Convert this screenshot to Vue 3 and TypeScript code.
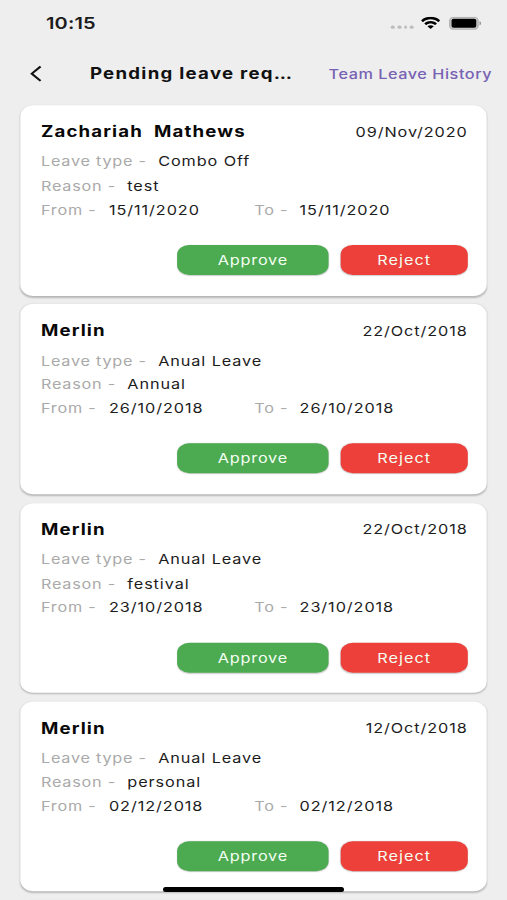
<script setup lang="ts">
interface LeaveRequest {
  id: number
  name: string
  applied: string
  type: string
  reason: string
  from: string
  to: string
}

const requests: LeaveRequest[] = [
  { id: 1, name: 'Zachariah\u00a0 Mathews', applied: '09/Nov/2020', type: 'Combo Off', reason: 'test', from: '15/11/2020', to: '15/11/2020' },
  { id: 2, name: 'Merlin', applied: '22/Oct/2018', type: 'Anual Leave', reason: 'Annual', from: '26/10/2018', to: '26/10/2018' },
  { id: 3, name: 'Merlin', applied: '22/Oct/2018', type: 'Anual Leave', reason: 'festival', from: '23/10/2018', to: '23/10/2018' },
  { id: 4, name: 'Merlin', applied: '12/Oct/2018', type: 'Anual Leave', reason: 'personal', from: '02/12/2018', to: '02/12/2018' },
]
</script>

<template>
  <div class="viewport">
    <div class="screen">
      <div class="status">
        <span class="time">10:15</span>
        <div class="indicators">
          <span class="dots"><i v-for="n in 4" :key="n"></i></span>
          <svg class="wifi" viewBox="0 0 16 12" preserveAspectRatio="none">
            <path d="M8 2.4c2.2 0 4.3.9 5.9 2.4.1.1.3.1.4 0l1.1-1.2c.1-.1.1-.3 0-.4C11.3-.8 4.7-.8.6 3.2c-.1.1-.1.3 0 .4l1.1 1.2c.1.1.3.1.4 0C3.7 3.3 5.8 2.4 8 2.4z" />
            <path d="M8 6.2c1.2 0 2.4.5 3.3 1.3.1.1.3.1.4 0l1.2-1.2c.1-.1.1-.3 0-.4-2.8-2.6-7-2.6-9.8 0-.1.1-.1.3 0 .4l1.2 1.2c.1.1.3.1.4 0C5.6 6.7 6.8 6.2 8 6.2z" />
            <path d="M10.3 8.9c.1-.1.1-.3 0-.4-1.3-1.1-3.3-1.1-4.6 0-.1.1-.1.3 0 .4l2.1 2.1c.1.1.3.1.4 0z" />
          </svg>
          <svg class="battery" viewBox="0 0 25 12" preserveAspectRatio="none">
            <rect x=".7" y=".7" width="21.3" height="10.6" rx="3" fill="#d4d4d4" stroke="#b4b4b4" stroke-width="1.2" />
            <rect x="2" y="2" width="18.7" height="8" rx="1.6" fill="#000" />
            <path d="M23.1 4c1.7.7 1.7 3.3 0 4z" fill="#999" />
          </svg>
        </div>
      </div>

      <header class="bar">
        <button class="back" aria-label="Back">
          <svg viewBox="0 0 9 15"><path d="M8 1 1.5 7.5 8 14" /></svg>
        </button>
        <h1 class="title">Pending leave req<span class="ellipsis">...</span></h1>
        <a class="history">Team Leave History</a>
      </header>

      <main class="list">
        <article v-for="r in requests" :key="r.id" class="card">
          <div class="head">
            <h2 class="name">{{ r.name }}</h2>
            <span class="applied">{{ r.applied }}</span>
          </div>
          <div class="row"><span class="label">Leave type -</span><span class="value">{{ r.type }}</span></div>
          <div class="row"><span class="label">Reason -</span><span class="value">{{ r.reason }}</span></div>
          <div class="dates">
            <div class="row from"><span class="label">From -</span><span>{{ r.from }}</span></div>
            <div class="row"><span class="label">To -</span><span>{{ r.to }}</span></div>
          </div>
          <div class="actions">
            <button class="btn approve">Approve</button>
            <button class="btn reject">Reject</button>
          </div>
        </article>
        <div class="card"></div>
      </main>
    </div>
    <div class="home"></div>
  </div>
</template>

<style>
body {
  background: #eee;
}
</style>

<style scoped>
.viewport {
  position: relative;
  width: 507px;
  height: 900px;
  overflow: hidden;
  background: #eee;
}
/* 375 x 812 logical screen stretched over the viewport */
.screen {
  width: 375px;
  height: 812px;
  transform: scale(1.352, 1.10837);
  transform-origin: 0 0;
  font-family: Inter, 'Liberation Sans', sans-serif;
  font-size: 12px;
  letter-spacing: 0.69px;
  color: #1c1c1c;
}
.status {
  display: flex;
  justify-content: space-between;
  align-items: center;
  height: 42px;
  padding: 0 19px 0 34px;
}
.time {
  font-size: 14.8px;
  font-weight: 600;
  letter-spacing: 0.1px;
}
.indicators {
  display: flex;
  align-items: center;
}
.dots {
  display: flex;
  gap: 2px;
  padding-top: 7px;
  margin-right: 5.2px;
}
.dots i {
  width: 2.8px;
  height: 3.3px;
  border-radius: 50%;
  background: #bdbdbd;
}
.wifi {
  width: 15px;
  height: 12px;
  margin-right: 5.2px;
}
.battery {
  width: 24.5px;
  height: 12px;
}
.bar {
  display: flex;
  align-items: center;
  height: 48px;
  padding: 0 11px 0 22px;
}
.back {
  display: flex;
  width: 44.5px;
  padding: 0;
  border: 0;
  background: none;
}
.back svg {
  width: 9px;
  height: 15px;
  fill: none;
  stroke: #111;
  stroke-width: 1.7;
}
.title {
  margin: 0;
  font-size: 13.8px;
  font-weight: 700;
  letter-spacing: 0.93px;
  color: #111;
  white-space: nowrap;
}
.ellipsis {
  letter-spacing: -0.2px;
}
.history {
  margin-left: auto;
  font-weight: 500;
  letter-spacing: 0.41px;
  color: #7762b3;
  white-space: nowrap;
}
.list {
  display: flex;
  flex-direction: column;
  gap: 7.7px;
  padding: 5px 14.8px 0 15.2px;
}
.card {
  box-sizing: border-box;
  flex: none;
  height: 171.6px;
  padding: 14px 14.5px 0 15.1px;
  border-radius: 10px;
  background: #fff;
  box-shadow: 0 1px 1.5px rgba(0, 0, 0, 0.23);
}
.head {
  display: flex;
  justify-content: space-between;
  align-items: center;
  height: 20px;
  margin-bottom: 6px;
}
.name {
  margin: 0;
  font-size: 13.8px;
  font-weight: 700;
  letter-spacing: 0.83px;
  color: #080808;
}
.applied {
  letter-spacing: 0.67px;
  margin-right: -0.2px;
}
.row {
  display: flex;
  align-items: center;
  gap: 8.4px;
  height: 21.7px;
  white-space: nowrap;
}
.from {
  gap: 9.2px;
}
.label {
  letter-spacing: 0.57px;
  color: #aaa;
}
.value {
  letter-spacing: 0.68px;
}
.dates {
  display: grid;
  grid-template-columns: 1fr 1fr;
}
.actions {
  display: flex;
  justify-content: flex-end;
  gap: 9px;
  padding-top: 21px;
}
.btn {
  height: 27px;
  padding: 0;
  border: 0;
  border-radius: 9px;
  font: inherit;
  color: #f4fff4;
  box-shadow: 0 0.5px 1px rgba(0, 0, 0, 0.2);
}
.approve {
  width: 112.3px;
  letter-spacing: 0.58px;
  background: #4caa50;
}
.reject {
  width: 93.5px;
  letter-spacing: 0.75px;
  background: #ed403a;
}
.home {
  position: absolute;
  left: 163px;
  top: 887px;
  width: 181px;
  height: 5px;
  border-radius: 3px;
  background: #000;
}
</style>
